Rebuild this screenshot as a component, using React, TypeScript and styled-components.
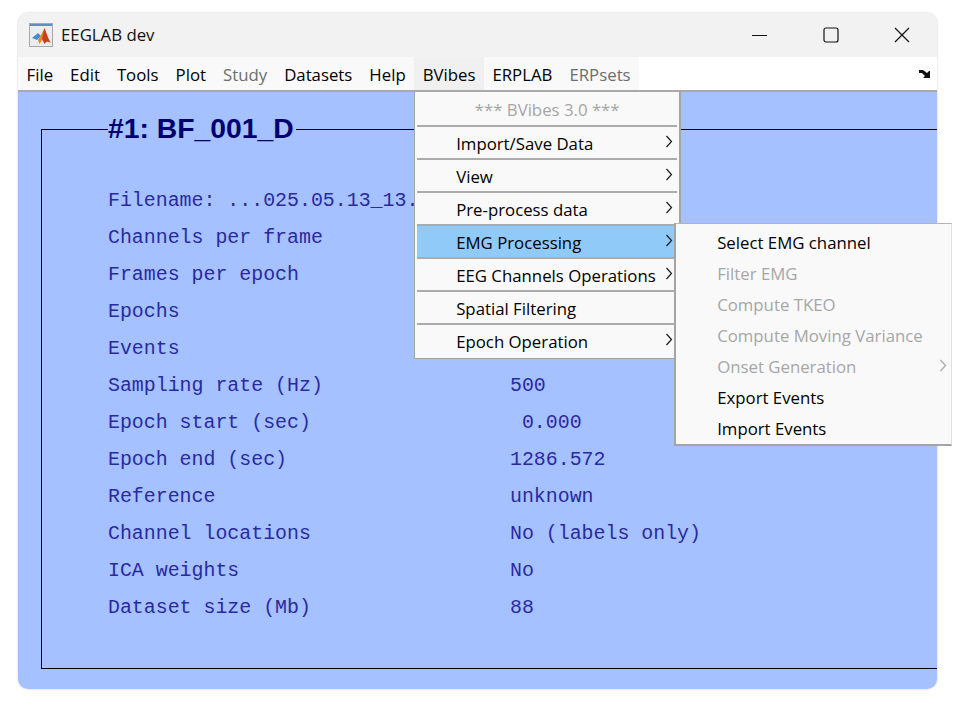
import styled, { createGlobalStyle } from 'styled-components';

const GlobalStyle = createGlobalStyle`
  html, body {
    background: #fff;
    height: 100%;
    margin: 0;
    overflow: hidden;
  }
`;

const uiFont = `"Open Sans", "Noto Sans", Arial, sans-serif`;

const Page = styled.div`
  height: 706px;
  padding: 13px 38px 17px 18px;
  box-sizing: border-box;
  width: 975px;
`;

const Window = styled.div`
  border-radius: 10px;
  box-shadow: 0 0 2px rgba(0, 0, 0, 0.25);
  display: flex;
  flex-direction: column;
  font-family: ${uiFont};
  height: 676px;
  position: relative;
  width: 919px;
`;

const TitleBar = styled.div`
  align-items: center;
  background: #f2f2f2;
  border-radius: 10px 10px 0 0;
  display: flex;
  height: 44px;
  padding-left: 11px;
`;

const AppIcon = styled.svg`
  flex: none;
  height: 24px;
  margin-right: 8px;
  width: 24px;
`;

const TitleText = styled.span`
  color: #111;
  flex: 1;
  font-size: 16.8px;
  padding-bottom: 2px;
`;

const WinButton = styled.button`
  align-items: center;
  background: none;
  border: 0;
  display: flex;
  height: 44px;
  justify-content: center;
  padding: 0;
  width: 71px;
`;

const MenuBar = styled.div`
  align-items: stretch;
  background: #fff;
  border-bottom: 2px solid #a9a9a9;
  box-sizing: border-box;
  display: flex;
  height: 36px;
`;

const MenuStrip = styled.div`
  background: #f9f9f9;
  display: flex;
`;

const MenuTitle = styled.div<{ $disabled?: boolean; $open?: boolean }>`
  align-items: center;
  background: ${(p) => (p.$open ? '#f0f0f0' : 'transparent')};
  color: ${(p) => (p.$disabled ? '#6d6d6d' : '#000')};
  display: flex;
  font-size: 16.8px;
  padding: 2px 8.5px 0;
  position: relative;
`;

const CornerArrow = styled.svg`
  height: 10px;
  margin: auto 6px auto auto;
  width: 12px;
`;

const Body = styled.div`
  background: #a6c1ff;
  border-radius: 0 0 10px 10px;
  box-sizing: border-box;
  flex: 1;
  padding: 20px 0 20px 23px;
`;

const Frame = styled.fieldset`
  border: solid #000;
  border-width: 1px 0 1px 1px;
  box-sizing: border-box;
  height: 557px;
  margin: 0;
  padding: 0 0 0 66px;
`;

const FrameTitle = styled.legend`
  color: #00006f;
  font-family: "Liberation Sans", Arial, sans-serif;
  font-size: 28.3px;
  font-weight: 700;
  line-height: 32px;
  margin-left: 0;
  padding: 0 2px 2px 0;
`;

const InfoRows = styled.div`
  display: grid;
  grid-auto-rows: 37px;
  grid-template-columns: 402px 1fr;
  padding-top: 36px;
`;

const InfoCell = styled.div`
  align-items: center;
  color: #2a2aa0;
  display: flex;
  font-family: "Liberation Mono", "Courier New", monospace;
  font-size: 19.9px;
  white-space: pre;
`;

const Menu = styled.div`
  background: #f9f9f9;
  border: 2px solid #a4a4a4;
  box-sizing: border-box;
  position: absolute;
`;

const BVibesMenu = styled(Menu)`
  border-width: 0 2px 1px 1px;
  height: 267px;
  left: 0;
  padding: 2px 2px 0 2px;
  top: 35px;
  width: 267px;
  z-index: 2;
`;

const Item = styled.div<{ $disabled?: boolean; $active?: boolean; $center?: boolean }>`
  align-items: center;
  background: ${(p) => (p.$active ? '#90caf9' : 'transparent')};
  border-top: ${(p) => (p.$center ? '0' : '2px solid #ababab')};
  box-sizing: border-box;
  color: ${(p) => (p.$disabled ? '#a6a6a6' : '#000')};
  display: flex;
  font-size: 16.8px;
  height: ${(p) => (p.$center ? '31px' : '33px')};
  justify-content: ${(p) => (p.$center ? 'center' : 'flex-start')};
  padding-left: 39px;
  padding-right: ${(p) => (p.$center ? '39px' : '0')};
  padding-top: ${(p) => (p.$center ? '0' : '2px')};
  position: relative;
  white-space: nowrap;
`;

const Chevron = styled.svg<{ $faded?: boolean }>`
  color: ${(p) => (p.$faded ? '#a6a6a6' : '#1a1a1a')};
  height: 13px;
  position: absolute;
  right: 4px;
  top: 8px;
  width: 8px;
`;

const EmgMenu = styled(Menu)`
  border-color: #b5b5b5 #e0e0e0 #a4a4a4 #a4a4a4;
  border-width: 1px 1px 2px 2px;
  height: 223px;
  left: 257px;
  padding-top: 3px;
  top: -3px;
  width: 278px;
  z-index: 3;
`;

const SubItem = styled.div<{ $disabled?: boolean }>`
  align-items: center;
  color: ${(p) => (p.$disabled ? '#a6a6a6' : '#000')};
  display: flex;
  font-size: 16.8px;
  height: 31px;
  padding-left: 41px;
  position: relative;
`;

const ChevronIcon = ({ faded }: { faded?: boolean }) => (
  <Chevron $faded={faded} viewBox="0 0 8 13">
    <path d="M1.5 1 L6.5 6.5 L1.5 12" fill="none" stroke="currentColor" strokeWidth="1.2" />
  </Chevron>
);

const rows = [
  ['Filename: ...025.05.13_13.', ''],
  ['Channels per frame', ''],
  ['Frames per epoch', ''],
  ['Epochs', ''],
  ['Events', ''],
  ['Sampling rate (Hz)', '500'],
  ['Epoch start (sec)', ' 0.000'],
  ['Epoch end (sec)', '1286.572'],
  ['Reference', 'unknown'],
  ['Channel locations', 'No (labels only)'],
  ['ICA weights', 'No'],
  ['Dataset size (Mb)', '88'],
];

const bvibesItems = [
  { label: 'Import/Save Data', sub: true },
  { label: 'View', sub: true },
  { label: 'Pre-process data', sub: true },
  { label: 'EMG Processing', sub: true, active: true },
  { label: 'EEG Channels Operations', sub: true },
  { label: 'Spatial Filtering', sub: false },
  { label: 'Epoch Operation', sub: true },
];

const emgItems = [
  { label: 'Select EMG channel' },
  { label: 'Filter EMG', disabled: true },
  { label: 'Compute TKEO', disabled: true },
  { label: 'Compute Moving Variance', disabled: true },
  { label: 'Onset Generation', disabled: true, sub: true },
  { label: 'Export Events' },
  { label: 'Import Events' },
];

const App = () => {
  return (
    <>
      <GlobalStyle />
      <Page>
        <Window>
          <TitleBar>
            <AppIcon viewBox="0 0 24 24">
              <rect x="0.5" y="0.5" width="23" height="23" fill="#ececec" stroke="#a8a8a8" />
              <rect x="1" y="1" width="22" height="2" fill="#5b8fc0" />
              <path d="M3 15 L9 10 L12 13 L8 17 Z" fill="#3f8fd0" />
              <path d="M9 17 L12 12 L15.5 5 L16 11 L13 17 L10.5 21 Z" fill="#e8861f" />
              <path d="M15.5 5 C17.5 9 19 16 22 20 C19.5 18.5 17.5 18 15.5 21 C14.5 19 13.5 17 13 16 Z" fill="#c8401a" />
            </AppIcon>
            <TitleText>EEGLAB dev</TitleText>
            <WinButton aria-label="Minimize">
              <svg width="15" height="15" viewBox="0 0 15 15">
                <path d="M0 7.5 H15" stroke="#111" strokeWidth="1" />
              </svg>
            </WinButton>
            <WinButton aria-label="Maximize">
              <svg width="16" height="16" viewBox="0 0 16 16">
                <rect x="1" y="1" width="14" height="14" rx="2" fill="none" stroke="#111" strokeWidth="1.2" />
              </svg>
            </WinButton>
            <WinButton aria-label="Close">
              <svg width="16" height="16" viewBox="0 0 16 16">
                <path d="M1 1 L15 15 M15 1 L1 15" stroke="#111" strokeWidth="1.2" />
              </svg>
            </WinButton>
          </TitleBar>
          <MenuBar>
            <MenuStrip>
              <MenuTitle>File</MenuTitle>
              <MenuTitle>Edit</MenuTitle>
              <MenuTitle>Tools</MenuTitle>
              <MenuTitle>Plot</MenuTitle>
              <MenuTitle $disabled>Study</MenuTitle>
              <MenuTitle>Datasets</MenuTitle>
              <MenuTitle>Help</MenuTitle>
              <MenuTitle $open>
                BVibes
                <BVibesMenu>
                  <Item $center $disabled>*** BVibes 3.0 ***</Item>
                  {bvibesItems.map((item) => (
                    <Item key={item.label} $active={item.active}>
                      {item.label}
                      {item.sub && <ChevronIcon />}
                      {item.active && (
                        <EmgMenu>
                          {emgItems.map((sub) => (
                            <SubItem key={sub.label} $disabled={sub.disabled}>
                              {sub.label}
                              {sub.sub && <ChevronIcon faded />}
                            </SubItem>
                          ))}
                        </EmgMenu>
                      )}
                    </Item>
                  ))}
                </BVibesMenu>
              </MenuTitle>
              <MenuTitle>ERPLAB</MenuTitle>
              <MenuTitle $disabled>ERPsets</MenuTitle>
            </MenuStrip>
            <CornerArrow viewBox="0 0 12 10">
              <path d="M0 1 H4 L8 4 L10 2 H11 V9 H4 L6 7 L3 4 H0 Z" fill="#111" />
            </CornerArrow>
          </MenuBar>
          <Body>
            <Frame>
              <FrameTitle>#1: BF_001_D</FrameTitle>
              <InfoRows>
                {rows.map(([label, value]) => (
                  <div key={label} style={{ display: 'contents' }}>
                    <InfoCell>{label}</InfoCell>
                    <InfoCell>{value}</InfoCell>
                  </div>
                ))}
              </InfoRows>
            </Frame>
          </Body>
        </Window>
      </Page>
    </>
  );
};

export default App;
